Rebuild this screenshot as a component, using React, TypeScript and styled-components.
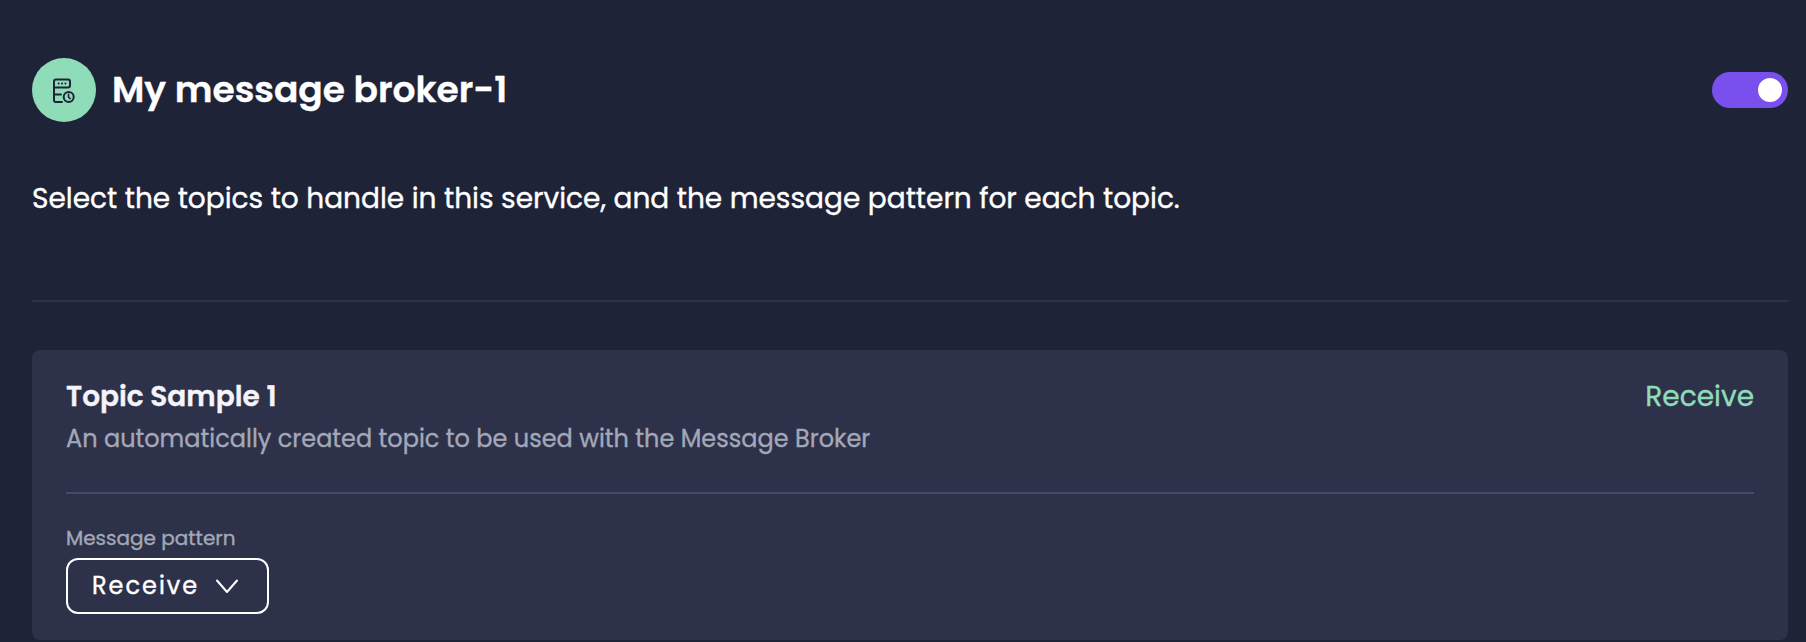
import React from "react";
import styled, { createGlobalStyle } from "styled-components";

const GlobalStyle = createGlobalStyle`
  * { box-sizing: border-box; }
  body {
    margin: 0;
    background: #1f2338;
    font-family: Poppins, Inter, "Liberation Sans", sans-serif;
    color: #ffffff;
    -webkit-text-stroke: 0.35px currentColor;
  }
`;

const Page = styled.main`
  height: 642px;
  padding: 58px 18px 0 32px;
  overflow: hidden;
`;

const Header = styled.header`
  display: flex;
  align-items: center;
  height: 64px;
`;

const Badge = styled.div`
  display: flex;
  align-items: center;
  justify-content: center;
  width: 64px;
  height: 64px;
  border-radius: 50%;
  background: #8fdcb9;
`;

const Title = styled.h1`
  margin: 0 auto 0 16px;
  font-size: 36px;
  font-weight: 600;
  line-height: 64px;
  white-space: nowrap;
`;

const Toggle = styled.button`
  display: flex;
  justify-content: flex-end;
  align-items: center;
  width: 76px;
  height: 36px;
  padding: 0 6px;
  border: 0;
  border-radius: 18px;
  background: #7950ed;
`;

const Knob = styled.span`
  width: 24px;
  height: 24px;
  border-radius: 50%;
  background: #ffffff;
`;

const Description = styled.p`
  margin: 55px 0 0;
  height: 43px;
  font-size: 28px;
  line-height: 44px;
  white-space: nowrap;
`;

const Divider = styled.hr<{ $color: string }>`
  margin: 0;
  border: 0;
  height: 2px;
  background: ${(p) => p.$color};
`;

const HeaderDivider = styled(Divider)`
  margin: 80px 0 48px;
`;

const Card = styled.section`
  height: 290px;
  padding: 26px 34px 0;
  border-radius: 8px;
  background: #2d314a;
`;

const CardHeader = styled.div`
  display: flex;
  justify-content: space-between;
  height: 42px;
  font-size: 28px;
  line-height: 42px;
`;

const TopicName = styled.h2`
  margin: 0;
  font-size: 28px;
  font-weight: 600;
  color: #f4f4fb;
`;

const Pattern = styled.span`
  color: #8fdcb9;
`;

const TopicDescription = styled.p`
  margin: 3px 0 35px;
  height: 36px;
  font-size: 24px;
  line-height: 36px;
  color: #a3a8b8;
  white-space: nowrap;
`;

const Label = styled.div`
  margin-top: 29px;
  height: 30px;
  font-size: 20px;
  line-height: 30px;
  color: #a3a8b8;
`;

const Select = styled.button`
  display: flex;
  align-items: center;
  width: 203px;
  height: 56px;
  margin-top: 5px;
  padding: 0 0 0 24px;
  border: 2px solid #ffffff;
  border-radius: 12px;
  background: transparent;
  color: #ffffff;
  font: inherit;
  font-size: 24px;
  line-height: 36px;
  letter-spacing: 2px;
  -webkit-text-stroke: 0.4px currentColor;
`;

const Chevron = styled.svg`
  margin-left: 16px;
`;

const BrokerIcon = () => (
  <svg width="24" height="28" viewBox="0 -0.6 24 28" fill="none" stroke="#1f2338" strokeWidth="2" strokeLinecap="round" strokeLinejoin="round">
    <path d="M4 3h12a2 2 0 0 1 2 2v4a2 2 0 0 1-2 2H2V5a2 2 0 0 1 2-2Z" />
    <path d="M2 11v13a1.4 1.4 0 0 0 1.4 1.4H10M2 18h7" />
    <path d="M6.6 7h.1M10 7h.1M13.4 7h.1" />
    <circle cx="16.7" cy="20.3" r="5" />
    <path d="M16.5 17.8v2.8l1.7 1.4" strokeWidth="1.6" />
  </svg>
);

export default function App() {
  return (
    <>
      <GlobalStyle />
      <Page>
        <Header>
          <Badge><BrokerIcon /></Badge>
          <Title>My message broker-1</Title>
          <Toggle role="switch" aria-checked="true"><Knob /></Toggle>
        </Header>
        <Description>Select the topics to handle in this service, and the message pattern for each topic.</Description>
        <HeaderDivider $color="#2d314a" />
        <Card>
          <CardHeader>
            <TopicName>Topic Sample 1</TopicName>
            <Pattern>Receive</Pattern>
          </CardHeader>
          <TopicDescription>An automatically created topic to be used with the Message Broker</TopicDescription>
          <Divider $color="#444b66" />
          <Label>Message pattern</Label>
          <Select>
            Receive
            <Chevron width="24" height="16" viewBox="0 0 24 16" fill="none" stroke="#ffffff" strokeWidth="2" strokeLinecap="round" strokeLinejoin="round">
              <path d="m2 2.5 10 11.5L22 2.5" />
            </Chevron>
          </Select>
        </Card>
      </Page>
    </>
  );
}
